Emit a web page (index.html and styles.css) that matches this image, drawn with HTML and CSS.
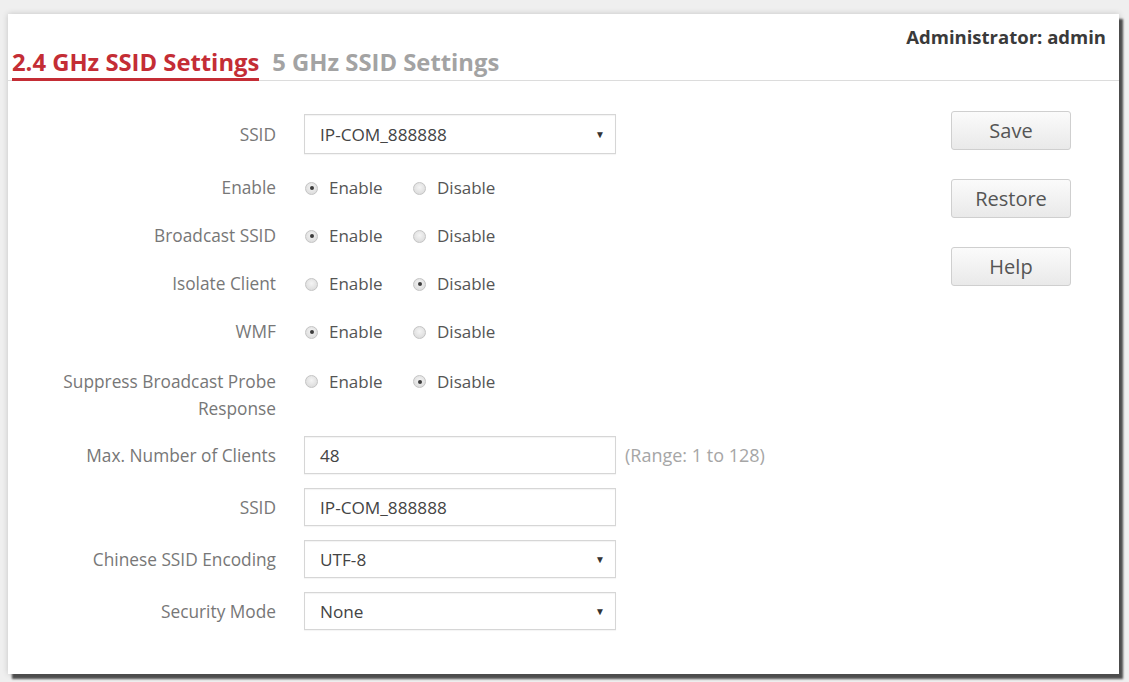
FILE: index.html
```html
<!DOCTYPE html>
<html lang="en">
<head>
<meta charset="utf-8">
<title>SSID Settings</title>
<link rel="stylesheet" href="styles.css">
</head>
<body>
<div class="window">
  <header class="header">
    <nav class="tabs">
      <span class="tab active">2.4 GHz SSID Settings</span>
      <span class="tab">5 GHz SSID Settings</span>
    </nav>
    <div class="admin">Administrator: admin</div>
  </header>
  <main class="main">
    <section class="form">
      <div class="row field r-first">
        <label class="label">SSID</label>
        <div class="control select"><span>IP-COM_888888</span><span class="arrow">▼</span></div>
      </div>
      <div class="row radio-row r-r1">
        <label class="label">Enable</label>
        <div class="radios"><span class="opt"><i class="radio on"></i>Enable</span><span class="opt"><i class="radio"></i>Disable</span></div>
      </div>
      <div class="row radio-row r-r">
        <label class="label">Broadcast SSID</label>
        <div class="radios"><span class="opt"><i class="radio on"></i>Enable</span><span class="opt"><i class="radio"></i>Disable</span></div>
      </div>
      <div class="row radio-row r-r">
        <label class="label">Isolate Client</label>
        <div class="radios"><span class="opt"><i class="radio"></i>Enable</span><span class="opt"><i class="radio on"></i>Disable</span></div>
      </div>
      <div class="row radio-row r-r">
        <label class="label">WMF</label>
        <div class="radios"><span class="opt"><i class="radio on"></i>Enable</span><span class="opt"><i class="radio"></i>Disable</span></div>
      </div>
      <div class="row radio-row tall r-r">
        <label class="label">Suppress Broadcast Probe<br>Response</label>
        <div class="radios"><span class="opt"><i class="radio"></i>Enable</span><span class="opt"><i class="radio on"></i>Disable</span></div>
      </div>
      <div class="row field r-max">
        <label class="label">Max. Number of Clients</label>
        <div class="control input"><span>48</span></div>
        <span class="hint">(Range: 1 to 128)</span>
      </div>
      <div class="row field r-f">
        <label class="label">SSID</label>
        <div class="control input"><span>IP-COM_888888</span></div>
      </div>
      <div class="row field r-f">
        <label class="label">Chinese SSID Encoding</label>
        <div class="control select"><span>UTF-8</span><span class="arrow">▼</span></div>
      </div>
      <div class="row field r-f">
        <label class="label">Security Mode</label>
        <div class="control select"><span>None</span><span class="arrow">▼</span></div>
      </div>
    </section>
    <aside class="actions">
      <button class="btn">Save</button>
      <button class="btn">Restore</button>
      <button class="btn">Help</button>
    </aside>
  </main>
</div>
</body>
</html>
```
FILE: styles.css
```css
* { box-sizing: border-box; }
html, body { margin: 0; padding: 0; }
body {
  background: #efefef;
  font-family: "Open Sans", "Noto Sans", sans-serif;
  width: 1129px;
  height: 682px;
  overflow: hidden;
  padding-top: 14px;
  padding-left: 8px;
}
.window {
  width: 1111px;
  height: 660px;
  background: #fff;
  box-shadow: 4px 5px 2px rgba(50,50,50,0.85), 0 0 6px rgba(0,0,0,0.18);
}
.header {
  display: flex;
  justify-content: space-between;
  height: 67px;
  border-bottom: 1px solid #dcdcdc;
  padding-left: 4px;
  padding-right: 13px;
}
.tabs {
  display: flex;
  align-self: flex-end;
  gap: 13px;
  margin-bottom: -1px;
}
.tab {
  font-size: 23.8px;
  font-weight: 700;
  color: #a3a3a3;
  line-height: 30px;
  padding-bottom: 1px;
  border-bottom: 3px solid transparent;
}
.tab.active {
  color: #c42d35;
  border-bottom-color: #c42d35;
}
.admin {
  padding-top: 10px;
  font-size: 18.5px;
  font-weight: 700;
  color: #3a3a3a;
}
.main {
  display: flex;
}
.form {
  flex: 1;
  display: flex;
  flex-direction: column;
  padding-top: 33px;
}
.row {
  display: flex;
  align-items: center;
}
.label {
  width: 268px;
  text-align: right;
  margin-right: 28px;
  font-size: 17.3px;
  color: #777;
  white-space: nowrap;
}
.field { height: 38px; }
.r-first { height: 40px; }
.r-r1 { margin-top: 22px; }
.r-r { margin-top: 24px; }
.r-max { margin-top: 14px; }
.r-f { margin-top: 14px; }
.radio-row { height: 24px; line-height: 24px; }
.radio-row.tall {
  height: 54px;
  align-items: flex-start;
}
.radio-row.tall .label { line-height: 27px; }
.radio-row.tall .radios { line-height: 27px; }
.control {
  width: 312px;
  height: 100%;
  border: 1px solid #d6d6d6;
  box-shadow: inset 0 1px 1px rgba(0,0,0,0.05), 0 1px 1px rgba(0,0,0,0.04);
  display: flex;
  align-items: center;
  justify-content: space-between;
  padding: 0 10px 0 15px;
  font-size: 17.2px;
  color: #444;
}
.arrow {
  font-size: 10px;
  color: #333;
}
.hint {
  margin-left: 9px;
  font-size: 18px;
  color: #a6a6a6;
}
.radios {
  display: flex;
  font-size: 17px;
  color: #555;
}
.opt {
  display: flex;
  align-items: center;
  width: 108px;
}
.radio-row.tall .opt { height: 27px; }
.radio {
  width: 13px;
  height: 13px;
  border-radius: 50%;
  border: 1px solid #c4c4c4;
  background: radial-gradient(circle at 50% 40%, #f4f4f4, #d6d6d6);
  margin-left: 1px;
  margin-right: 11px;
  position: relative;
  flex: none;
}
.radio.on::after {
  content: "";
  position: absolute;
  left: 3.5px;
  top: 3.5px;
  width: 4px;
  height: 4px;
  border-radius: 50%;
  background: #3c3c3c;
}
.actions {
  width: 120px;
  margin-right: 48px;
  padding-top: 30px;
  display: flex;
  flex-direction: column;
  gap: 29px;
}
.btn {
  height: 39px;
  width: 120px;
  border: 1px solid #cfcfcf;
  border-radius: 3px;
  background: linear-gradient(#fbfbfb, #e9e9e9);
  font-family: "Open Sans", "Noto Sans", sans-serif;
  font-size: 20px;
  color: #555;
  padding: 0;
}
```
